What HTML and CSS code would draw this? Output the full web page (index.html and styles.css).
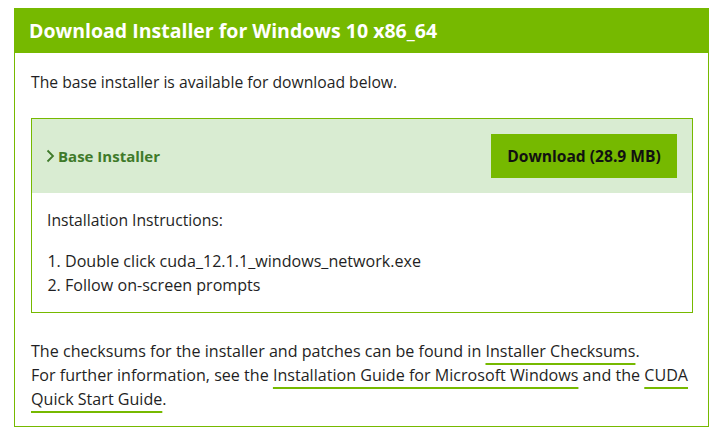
FILE: index.html
```html
<!DOCTYPE html>
<html>
<head>
<meta charset="utf-8">
<link rel="stylesheet" href="styles.css">
</head>
<body>
<div class="panel">
  <div class="panel-head">Download Installer for Windows 10 x86_64</div>
  <div class="panel-body">
    <p class="intro">The base installer is available for download below.</p>
    <div class="inst">
      <div class="inst-head">
        <div class="inst-title">
          <svg class="chev" width="9" height="14" viewBox="0 0 9 14"><path d="M1.5 1.5 L7 7 L1.5 12.5" fill="none" stroke="#3f7a2a" stroke-width="1.8"/></svg>
          <span>Base Installer</span>
        </div>
        <a class="dl-btn">Download (28.9 MB)</a>
      </div>
      <div class="inst-body">
        <p class="inst-label">Installation Instructions:</p>
        <ol class="steps">
          <li>Double click cuda_12.1.1_windows_network.exe</li>
          <li>Follow on-screen prompts</li>
        </ol>
      </div>
    </div>
    <p class="notes">The checksums for the installer and patches can be found in <a class="ln">Installer Checksums</a>.<br>For further information, see the <a class="ln">Installation Guide for Microsoft Windows</a> and the <a class="ln">CUDA Quick Start Guide</a>.</p>
  </div>
</div>
</body>
</html>
```
FILE: styles.css
```css
html, body {
  margin: 0;
  padding: 0;
  background: #fff;
}
body {
  font-family: "Open Sans", "Liberation Sans", sans-serif;
  color: #1f1f24;
  font-size: 16.1px;
}
.panel {
  margin: 8px 0 0 14px;
  width: 695px;
  box-sizing: border-box;
  border: 1px solid #76b900;
  border-top: none;
}
.panel-head {
  background: #76b900;
  color: #fff;
  font-weight: 700;
  font-size: 19.5px;
  height: 45px;
  line-height: 46px;
  padding-left: 15px;
  margin: 0 -1px;
}
.panel-body {
  padding: 17px 15px 15px 16px;
}
.intro {
  margin: 0 0 24px 0;
  line-height: 24px;
  font-size: 15.7px;
}
.inst {
  border: 1px solid #76b900;
}
.inst-head {
  background: #d9ecd2;
  height: 74px;
  display: flex;
  align-items: center;
  justify-content: space-between;
  padding: 0 15px 0 14px;
}
.inst-title {
  display: flex;
  align-items: center;
  gap: 3px;
  color: #3f7a2a;
  font-weight: 700;
  font-size: 15px;
}
.chev {
  display: block;
}
.dl-btn {
  display: flex;
  align-items: center;
  justify-content: center;
  background: #76b900;
  color: #111;
  font-weight: 700;
  font-size: 15.6px;
  width: 186px;
  height: 44px;
  box-sizing: border-box;
}
.inst-body {
  padding: 15px 15px 15px 15px;
}
.inst-label {
  margin: 0 0 17px 0;
  line-height: 24px;
  font-size: 15.7px;
}
.steps {
  margin: 0;
  padding-left: 18px;
  line-height: 24px;
}
.notes {
  margin: 26px 0 0 0;
  line-height: 24px;
}
.ln {
  text-decoration: underline;
  text-decoration-color: #76b900;
  text-decoration-thickness: 2px;
  text-underline-offset: 6px;
  color: #1f1f24;
}
```
